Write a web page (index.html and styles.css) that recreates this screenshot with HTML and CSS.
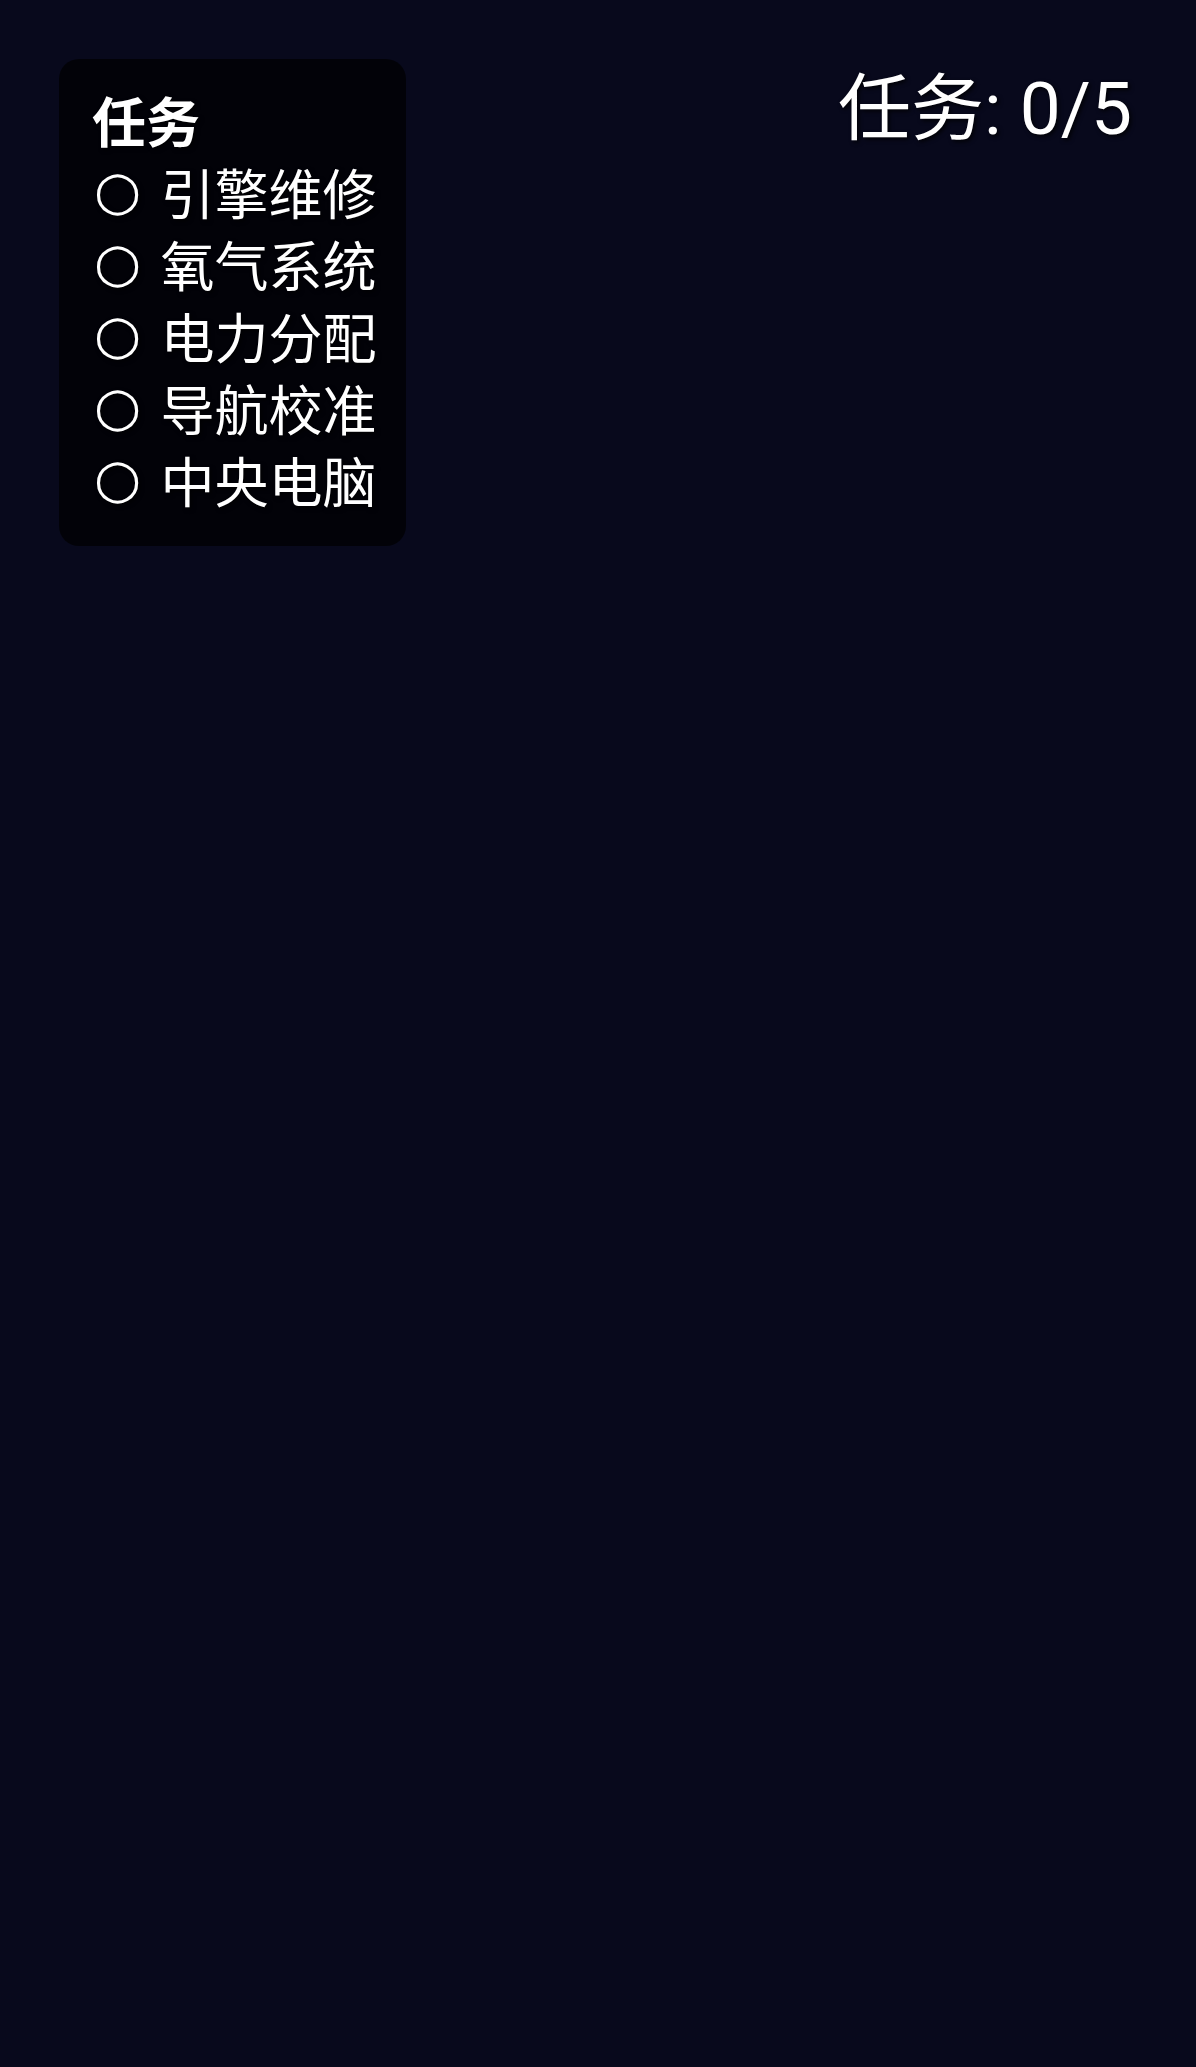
FILE: index.html
```html
<!DOCTYPE html>
<html lang="zh-CN">
<head>
<meta charset="utf-8">
<title>任务</title>
<link rel="stylesheet" href="styles.css">
</head>
<body>
<div class="hud">
  <div class="task-panel">
    <div class="task-title">任务</div>
    <div class="task-item"><span class="mark">○</span> 引擎维修</div>
    <div class="task-item"><span class="mark">○</span> 氧气系统</div>
    <div class="task-item"><span class="mark">○</span> 电力分配</div>
    <div class="task-item"><span class="mark">○</span> 导航校准</div>
    <div class="task-item"><span class="mark">○</span> 中央电脑</div>
  </div>
  <div class="task-counter">任务: 0/5</div>
</div>
</body>
</html>
```

FILE: styles.css
```css
html, body {
  margin: 0;
  padding: 0;
}
body {
  background: #08091c;
  width: 1196px;
  height: 2067px;
  overflow: hidden;
  color: #ffffff;
  font-family: Roboto, "Noto Sans CJK SC", sans-serif;
}
.hud {
  display: flex;
  justify-content: space-between;
  align-items: flex-start;
  padding: 59px 64px 0 59px;
}
.task-panel {
  background: rgba(0, 0, 0, 0.7);
  border-radius: 20px;
  padding: 30px 29px 25px 33px;
  font-size: 54px;
  line-height: 72px;
  text-shadow: 2px 2px 4px rgba(0, 0, 0, 0.8);
}
.task-title {
  font-weight: 700;
}
.task-item {
  white-space: nowrap;
}
.mark {
  font-family: "DejaVu Sans", sans-serif;
  line-height: 0;
  margin-left: 2px;
  margin-right: 6px;
  vertical-align: 6px;
}
.task-counter {
  font-size: 73px;
  line-height: 86px;
  margin-top: 7px;
  text-shadow: 2px 2px 4px rgba(0, 0, 0, 0.8);
  white-space: nowrap;
}
```
